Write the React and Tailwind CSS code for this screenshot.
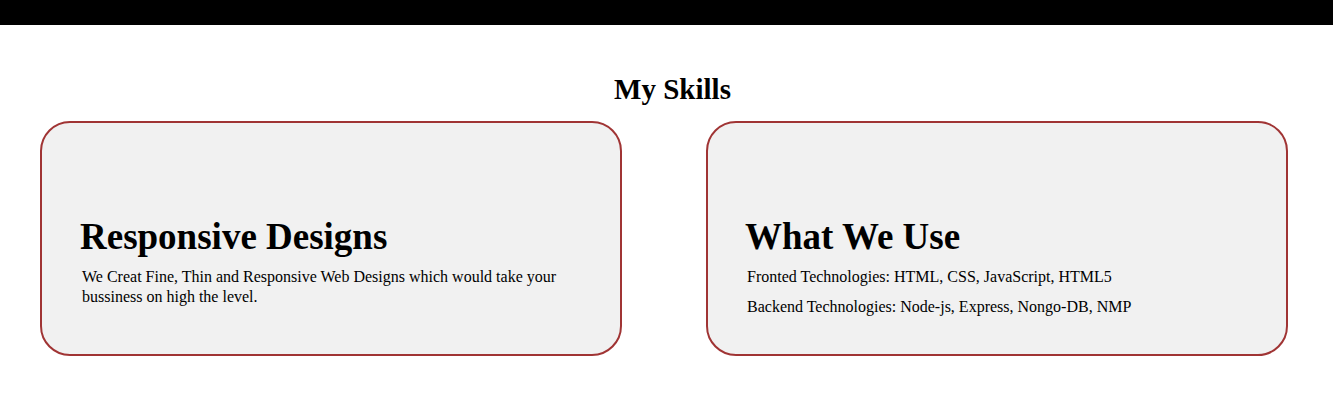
export default function App() {
  return (
    <div className="min-h-screen bg-white text-black" style={{ fontFamily: '"Liberation Serif", "Times New Roman", serif' }}>
      <div className="h-[25px] bg-black" />
      <section className="pt-[48px]">
        <h2 className="pl-[12px] text-center text-[29px] font-bold leading-[32px]">My Skills</h2>
        <div className="mt-[16px] flex gap-[84px] px-[40px]">
          <div className="h-[235px] w-[582px] rounded-[30px] border-2 border-[#a03434] bg-[#f1f1f1] pl-[38px] pr-[40px] pt-[92px]">
            <h1 className="text-[37px] font-bold leading-[44px]">Responsive Designs</h1>
            <p className="mt-[8px] pl-[2px] text-[16px] leading-[20px]">
              We Creat Fine, Thin and Responsive Web Designs which would take your bussiness on high the level.
            </p>
          </div>
          <div className="h-[235px] w-[582px] rounded-[30px] border-2 border-[#a03434] bg-[#f1f1f1] pl-[37px] pr-[40px] pt-[92px]">
            <h1 className="text-[37px] font-bold leading-[44px]">What We Use</h1>
            <p className="mt-[8px] pl-[2px] text-[16px] leading-[20px]">Fronted Technologies: HTML, CSS, JavaScript, HTML5</p>
            <p className="mt-[10px] pl-[2px] text-[16px] leading-[20px]">Backend Technologies: Node-js, Express, Nongo-DB, NMP</p>
          </div>
        </div>
      </section>
    </div>
  );
}
